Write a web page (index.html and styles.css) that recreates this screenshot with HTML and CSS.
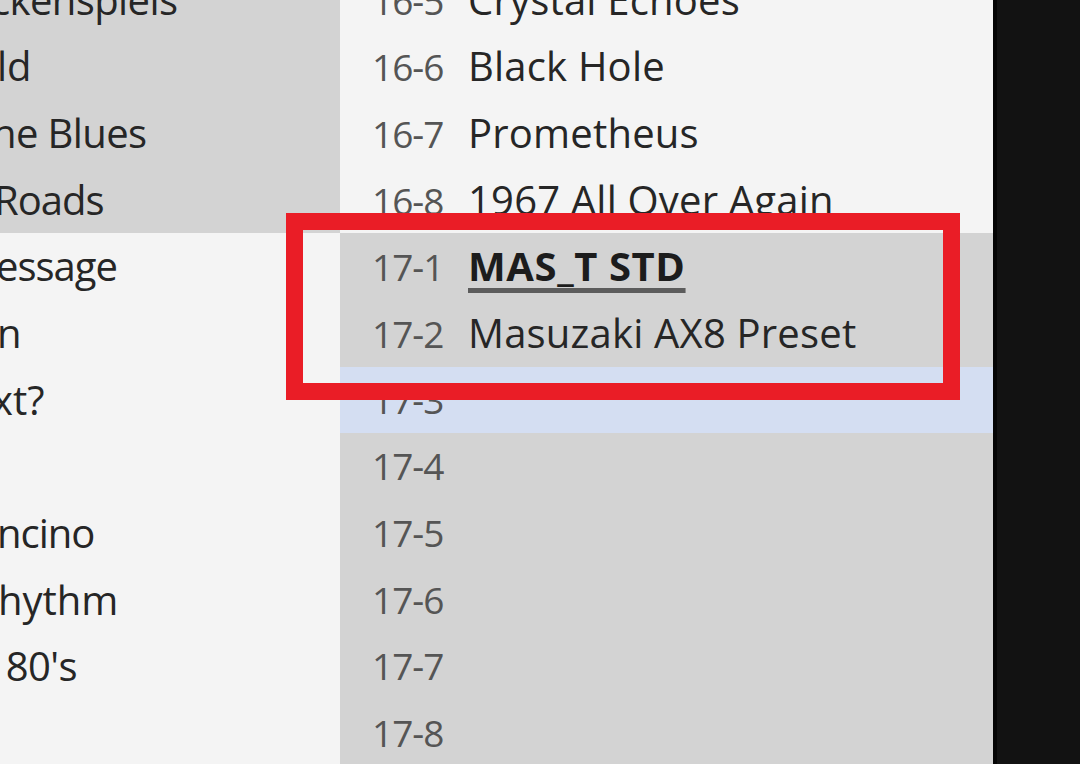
FILE: index.html
```html
<!DOCTYPE html>
<html lang="en">
<head>
<meta charset="utf-8">
<title>Preset list</title>
<link rel="stylesheet" href="styles.css">
</head>
<body>
<div class="screen">
  <div class="col col-left">
    <ul class="list">
      <li class="row dim"><span class="name tight shift-9">ckenspiels</span></li>
      <li class="row dim"><span class="name shift-3">ld</span></li>
      <li class="row dim"><span class="name tight shift-8">ne Blues</span></li>
      <li class="row dim"><span class="name tighter shift-6">Roads</span></li>
      <li class="row"><span class="name tighter shift-4">essage</span></li>
      <li class="row"><span class="name shift-3">n</span></li>
      <li class="row"><span class="name shift-8">xt?</span></li>
      <li class="row"><span class="name"></span></li>
      <li class="row"><span class="name tighter shift-3">ncino</span></li>
      <li class="row"><span class="name shift-2">hythm</span></li>
      <li class="row"><span class="name tight shift-4">&nbsp;80's</span></li>
      <li class="row"><span class="name"></span></li>
    </ul>
  </div>
  <div class="col col-right">
    <ul class="list">
      <li class="row"><span class="num">16-5</span><span class="name">Crystal Echoes</span></li>
      <li class="row"><span class="num">16-6</span><span class="name">Black Hole</span></li>
      <li class="row"><span class="num">16-7</span><span class="name">Prometheus</span></li>
      <li class="row"><span class="num">16-8</span><span class="name">1967 All Over Again</span></li>
      <li class="row dim"><span class="num">17-1</span><span class="name current">MAS_T STD</span></li>
      <li class="row dim"><span class="num">17-2</span><span class="name">Masuzaki AX8 Preset</span></li>
      <li class="row hover"><span class="num">17-3</span><span class="name"></span></li>
      <li class="row dim"><span class="num">17-4</span><span class="name"></span></li>
      <li class="row dim"><span class="num">17-5</span><span class="name"></span></li>
      <li class="row dim"><span class="num">17-6</span><span class="name"></span></li>
      <li class="row dim"><span class="num">17-7</span><span class="name"></span></li>
      <li class="row dim"><span class="num">17-8</span><span class="name"></span></li>
    </ul>
  </div>
  <div class="side"></div>
  <div class="highlight-box"></div>
</div>
</body>
</html>
```

FILE: styles.css
```css
* { box-sizing: border-box; }

html, body {
  margin: 0;
  padding: 0;
  background: #f4f4f4;
}

body {
  width: 1080px;
  height: 764px;
  overflow: hidden;
  font-family: "Open Sans", "Noto Sans", "Liberation Sans", sans-serif;
  font-size: 40px;
  color: #262626;
}

.screen {
  position: relative;
  display: flex;
  width: 1080px;
  height: 764px;
  overflow: hidden;
}

.col {
  overflow: hidden;
  background: #f4f4f4;
}

.col-left {
  width: 340px;
  flex: none;
}

.col-right {
  width: 653px;
  flex: none;
}

.side {
  flex: 1;
  background: #121212;
  border-left: 4px solid #050505;
}

.list {
  list-style: none;
  margin: -33.33px 0 0 0;
  padding: 0;
}

.row {
  display: flex;
  align-items: baseline;
  height: 66.67px;
  line-height: 66.67px;
  white-space: nowrap;
  background: #f4f4f4;
}

.row.dim {
  background: #d3d3d3;
}

.row.hover {
  background: #d4def2;
}

.col-right .row {
  padding-left: 32px;
}

.num {
  width: 96px;
  flex: none;
  color: #555;
  font-size: 37px;
  letter-spacing: -1px;
}

.name {
  color: #262626;
}

.col-right .name {
  letter-spacing: 0.2px;
}

.name.current {
  font-weight: 700;
  color: #1c1c1c;
  letter-spacing: 0.6px;
  text-decoration: underline;
  text-decoration-color: #5c5c5c;
  text-decoration-thickness: 5px;
  text-underline-offset: 7px;
}

.tight { letter-spacing: -0.6px; }
.tighter { letter-spacing: -1px; }

.shift-2 { margin-left: -2px; }
.shift-3 { margin-left: -3px; }
.shift-4 { margin-left: -4px; }
.shift-6 { margin-left: -6px; }
.shift-8 { margin-left: -8px; }
.shift-9 { margin-left: -9px; }

.highlight-box {
  position: absolute;
  left: 286px;
  top: 213px;
  width: 674px;
  height: 187px;
  border: 17px solid #ea1d26;
  pointer-events: none;
}
```
